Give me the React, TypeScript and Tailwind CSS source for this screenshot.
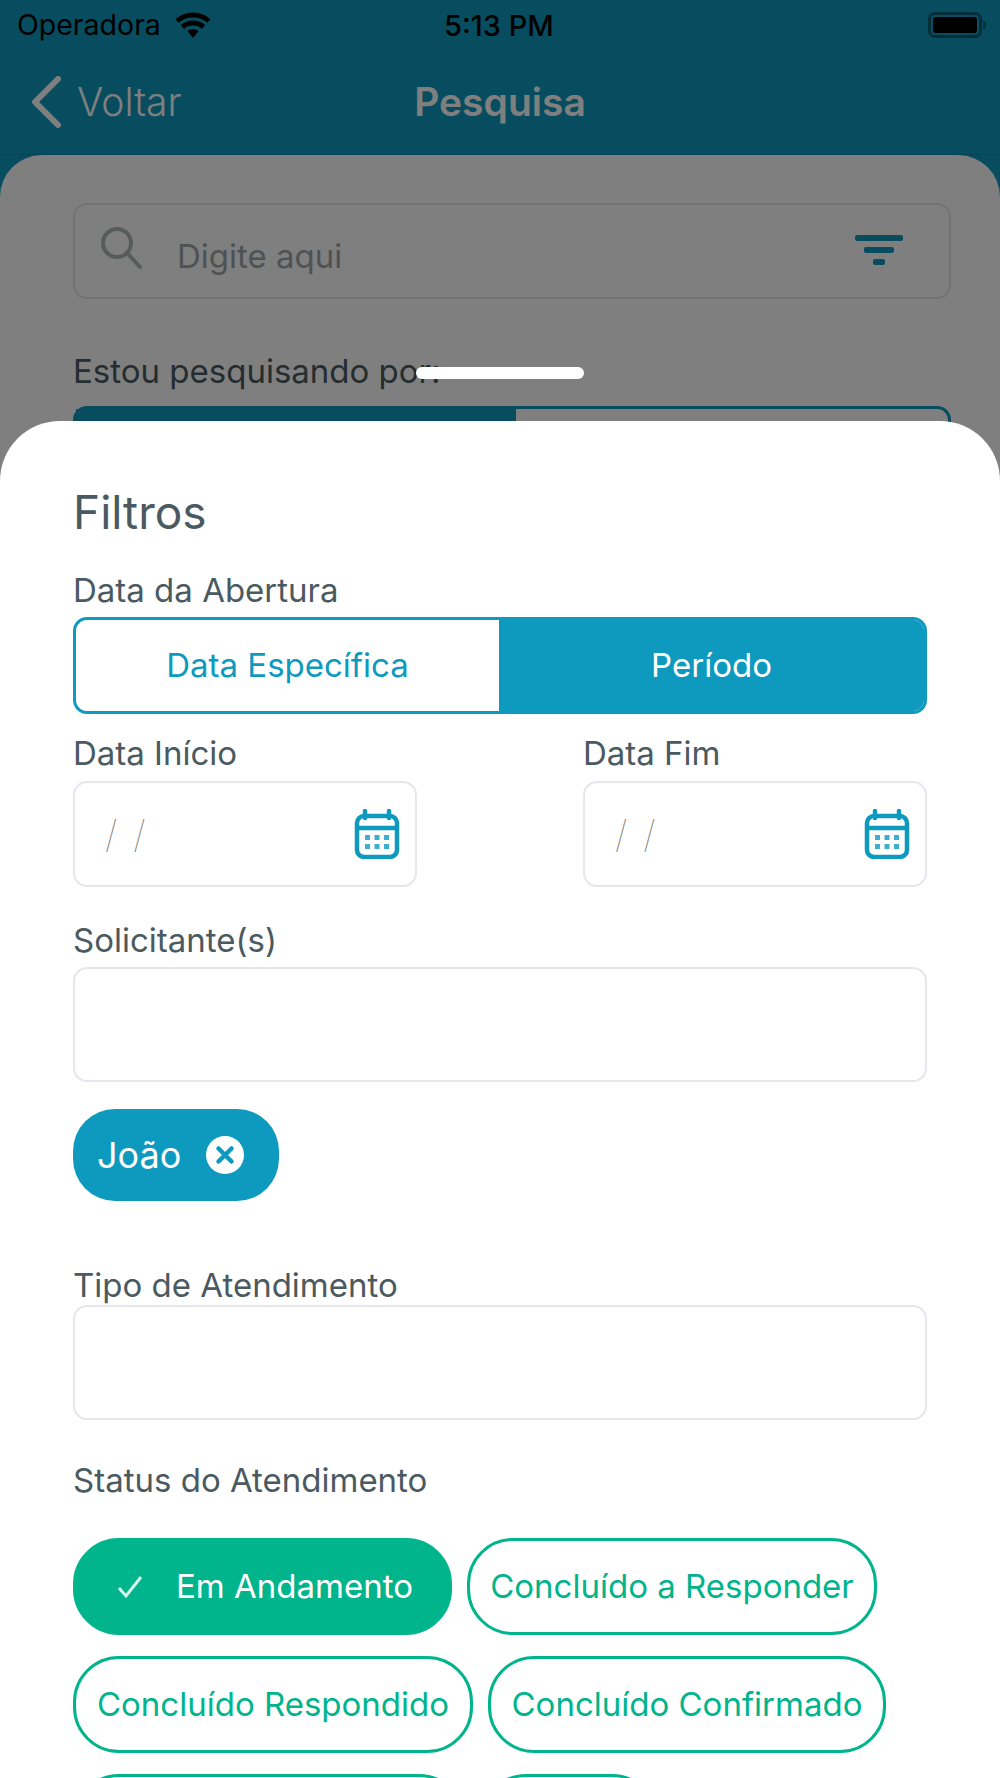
import React from 'react';

function CalendarIcon() {
  return (
    <svg width="46" height="50" viewBox="0 0 46 50" fill="none">
      <rect x="3" y="7" width="40" height="41" rx="7" stroke="#0E9ABF" strokeWidth="4.5" />
      <path d="M3 19h40" stroke="#0E9ABF" strokeWidth="4.5" />
      <path d="M11 2v7M35 2v7" stroke="#0E9ABF" strokeWidth="4.5" strokeLinecap="round" />
      <g fill="#0E9ABF" opacity="0.8">
        <rect x="11" y="26" width="5" height="5" />
        <rect x="20.5" y="26" width="5" height="5" />
        <rect x="30" y="26" width="5" height="5" />
        <rect x="11" y="35" width="5" height="5" />
        <rect x="20.5" y="35" width="5" height="5" />
        <rect x="30" y="35" width="5" height="5" />
      </g>
    </svg>
  );
}

function DateField({ label, className }: { label: string; className?: string }) {
  return (
    <div className={className}>
      <p className="text-[33px] leading-[40px] text-[#4A5A60]">{label}</p>
      <div className="mt-[8px] flex h-[106px] items-center justify-between rounded-[14px] border-2 border-[#E6E6EC] bg-white pl-[30px] pr-[15px]">
        <span className="text-[38px] font-thin tracking-[16px] text-[#777]">//</span>
        <CalendarIcon />
      </div>
    </div>
  );
}

function Pill({ text, active, className }: { text?: string; active?: boolean; className?: string }) {
  return (
    <div
      className={
        (active ? 'bg-[#00B48C] pl-[4px] text-white ' : 'bg-white text-[#00B48C] ') +
        'flex h-[97px] items-center justify-center rounded-[46px] border-[3px] border-[#00B48C] text-[33px] whitespace-nowrap ' +
        (className ?? '')
      }
    >
      {active && (
        <svg width="28" height="26" viewBox="0 0 28 26" fill="none" className="mr-[32px]">
          <path d="M3 14l7 8L25 3" stroke="#D9F4EC" strokeWidth="3" />
        </svg>
      )}
      {text}
    </div>
  );
}

export default function App() {
  return (
    <div className="relative h-[1778px] w-[1000px] overflow-hidden bg-[#0E9ABF] font-['Inter',sans-serif]">
      {/* tela de tras */}
      <div className="flex h-[46px] items-center justify-between pl-[17px] pr-[14px] pt-[4px] text-black">
        <div className="flex items-center gap-[13px]">
          <span className="text-[28.5px] leading-none">Operadora</span>
          <svg width="38" height="28" viewBox="0 0 38 28">
            <path d="M19 27l-5.5-7a8.5 8.5 0 0 1 11 0z" fill="#000" />
            <path d="M3 10a24 24 0 0 1 32 0M8.5 16a16 16 0 0 1 21 0" stroke="#000" strokeWidth="5" fill="none" />
          </svg>
        </div>
        <span className="absolute left-[444px] text-[29px] font-medium leading-none">5:13 PM</span>
        <div className="flex items-center">
          <div className="flex h-[26px] w-[54px] items-center rounded-[7px] border-[3px] border-black/40 p-[2px]">
            <div className="h-full w-full rounded-[3px] bg-black" />
          </div>
          <div className="ml-[1px] h-[8px] w-[3px] rounded-r-full bg-black/40" />
        </div>
      </div>
      <div className="relative flex h-[109px] items-center justify-center border-b border-black/10 pt-[4px]">
        <div className="absolute left-[31px] flex items-center text-white">
          <svg width="30" height="52" viewBox="0 0 30 52" fill="none" stroke="#fff" strokeWidth="6" strokeLinecap="round" strokeLinejoin="round">
            <path d="M27 3L4 26l23 23" />
          </svg>
          <span className="ml-[16px] text-[39px] font-light">Voltar</span>
        </div>
        <span className="text-[39px] font-semibold text-white">Pesquisa</span>
      </div>
      <div className="h-[1623px] rounded-t-[42px] bg-white pl-[73px] pr-[49px] pt-[48px]">
        <div className="flex h-[96px] items-center rounded-[14px] border-2 border-[#E6E6EC] pl-[24px] pr-[46px]">
          <svg width="44" height="44" viewBox="0 0 44 44" fill="none" stroke="#AEB6B8" strokeWidth="4" className="-mt-[8px]">
            <circle cx="18" cy="18" r="14" />
            <path d="M28 28l13 14" strokeLinecap="round" />
          </svg>
          <span className="ml-[34px] mt-[11px] flex-1 text-[33px] text-[#9CA5A8]">Digite aqui</span>
          <svg width="48" height="32" viewBox="0 0 48 32" fill="#0E9ABF">
            <rect x="0" y="0" width="48" height="6" rx="2" />
            <rect x="9" y="12" width="30" height="6" rx="2" />
            <rect x="18" y="24" width="12" height="6" rx="2" />
          </svg>
        </div>
        <p className="mt-[52px] text-[33px] leading-[40px] text-[#4A5A60]">Estou pesquisando por:</p>
        <div className="mt-[15px] flex h-[96px] rounded-[14px] border-[3px] border-[#0E9ABF]">
          <div className="w-[440px] bg-[#0E9ABF]" />
        </div>
      </div>

      {/* escurecimento do modal */}
      <div className="absolute inset-0 bg-black/50" />
      <div className="absolute left-[416px] top-[367px] h-[12px] w-[168px] rounded-full bg-white" />

      {/* modal de filtros */}
      <div className="absolute inset-x-0 bottom-0 top-[421px] rounded-t-[60px] bg-white px-[73px] pt-[63px]">
        <h2 className="text-[46px] leading-[56px] text-[#4A5A60]">Filtros</h2>
        <p className="mt-[30px] text-[33px] leading-[40px] text-[#4A5A60]">Data da Abertura</p>
        <div className="mt-[7px] flex h-[97px] overflow-hidden rounded-[14px] border-[3px] border-[#0E9ABF] text-[33px]">
          <div className="flex w-[423px] items-center justify-center text-[#0E9ABF]">Data Específica</div>
          <div className="flex flex-1 items-center justify-center bg-[#0E9ABF] text-white">Período</div>
        </div>
        <div className="mt-[19px] flex">
          <DateField label="Data Início" className="w-[344px]" />
          <DateField label="Data Fim" className="ml-[166px] w-[344px]" />
        </div>
        <p className="mt-[33px] text-[33px] leading-[40px] text-[#4A5A60]">Solicitante(s)</p>
        <div className="mt-[7px] h-[115px] rounded-[14px] border-2 border-[#E6E6EC]" />
        <div className="mt-[27px] flex h-[92px] w-[206px] items-center rounded-[42px] bg-[#0E9ABF] pl-[24px] text-white">
          <span className="text-[36px]">João</span>
          <svg width="38" height="38" viewBox="0 0 38 38" className="ml-[25px]">
            <circle cx="19" cy="19" r="19" fill="#fff" />
            <path d="M12.5 12.5l13 13M25.5 12.5l-13 13" stroke="#0E9ABF" strokeWidth="4.5" strokeLinecap="round" />
          </svg>
        </div>
        <p className="mt-[64px] text-[33px] leading-[40px] text-[#4A5A60]">Tipo de Atendimento</p>
        <div className="h-[115px] rounded-[14px] border-2 border-[#E6E6EC]" />
        <p className="mt-[40px] text-[33px] leading-[40px] text-[#4A5A60]">Status do Atendimento</p>
        <div className="mt-[38px] flex flex-wrap gap-x-[15px] gap-y-[21px]">
          <Pill text="Em Andamento" active className="w-[379px]" />
          <Pill text="Concluído a Responder" className="w-[410px]" />
          <Pill text="Concluído Respondido" className="w-[400px]" />
          <Pill text="Concluído Confirmado" className="w-[398px]" />
          <Pill className="w-[392px]" />
          <Pill className="w-[178px]" />
        </div>
      </div>
    </div>
  );
}
